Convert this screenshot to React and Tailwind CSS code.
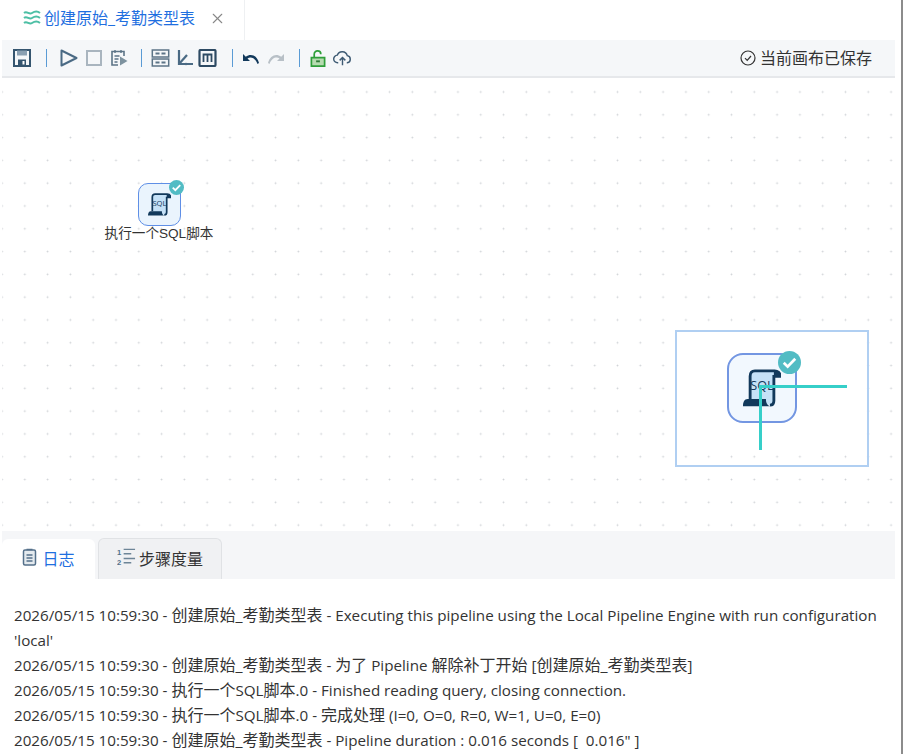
import React from "react";
import { X } from "lucide-react";

const LOG_LINES = [
  "2026/05/15 10:59:30 - 创建原始_考勤类型表 - Executing this pipeline using the Local Pipeline Engine with run configuration",
  "'local'",
  "2026/05/15 10:59:30 - 创建原始_考勤类型表 - 为了 Pipeline 解除补丁开始 [创建原始_考勤类型表]",
  "2026/05/15 10:59:30 - 执行一个SQL脚本.0 - Finished reading query, closing connection.",
  "2026/05/15 10:59:30 - 执行一个SQL脚本.0 - 完成处理 (I=0, O=0, R=0, W=1, U=0, E=0)",
  "2026/05/15 10:59:30 - 创建原始_考勤类型表 - Pipeline duration : 0.016 seconds [  0.016\" ]",
];

// latin and chinese runs need different sizes to get the widths right
function LogLine({ text }) {
  const parts = text.split(/([\u4e00-\u9fff_]+)/);
  return (
    <div className="whitespace-pre">
      {parts.map((p, i) =>
        i % 2 === 1 ? <span key={i} className="text-[16px]">{p}</span> : <span key={i}>{p}</span>
      )}
    </div>
  );
}

function Sep() {
  return <div className="w-px h-[18px] bg-[#5a9bd5] shrink-0" />;
}

function SqlIcon({ className }) {
  return (
    <svg viewBox="0 0 24 24" className={className}>
      <path d="M4.500 19V4.500C4.500 2.300 5.500 1.200 7.500 1.200H20c2 0 3.500 1.300 3.500 3.500h-4V20c0 1.800-1 2.800-2.500 2.800" fill="#c5e1f7" stroke="#12395b" strokeWidth="1.800" />
      <path d="M0 23.500c0-2.500.8-4.500 3-4.500h11.500v.5c0 1.500.8 3.500 2.500 4z" fill="#12395b" />
      <path d="M19.500 1.200c2.500 0 4 1.300 4 3.800h-4z" fill="#12395b" />
      <text x="12" y="13.500" textAnchor="middle" fontSize="8" fill="#12395b" fontFamily="'Open Sans', sans-serif">SQL</text>
    </svg>
  );
}

function CheckBadge({ className }) {
  return (
    <svg viewBox="0 0 20 20" className={className}>
      <circle cx="10" cy="10" r="10" fill="#52bcc4" />
      <path d="M5 10.300l3.400 3.300L15 6.800" fill="none" stroke="#fff" strokeWidth="2.400" />
    </svg>
  );
}

function Toolbar() {
  return (
    <div className="h-[38px] bg-[#f5f7f9] border-b-2 border-[#e6e8eb] flex items-center pl-[11px] pr-[23px]">
      <div className="flex items-center">
        <svg viewBox="0 0 18 18" className="w-[18px] h-[18px]">
          <path d="M1 1h16v16H1z" fill="none" stroke="#35556f" strokeWidth="2" />
          <path d="M4 1.500h10v5H4z" fill="#8aa0b2" />
          <path d="M5 10.500h8V17H5z" fill="#35556f" />
          <path d="M9.500 12h2v3.500h-2z" fill="#fff" />
        </svg>
        <div className="ml-[15px]"><Sep /></div>
        <svg viewBox="0 0 18 18" className="w-[18px] h-[18px] ml-[13px]">
          <path d="M1.500 1.500L16.500 9 1.500 16.500z" fill="none" stroke="#4a6a84" strokeWidth="2" strokeLinejoin="round" />
        </svg>
        <div className="w-[16px] h-[16px] border-2 border-[#a9b5bf] ml-[8px]" />
        <svg viewBox="0 0 18 18" className="w-[18px] h-[18px] ml-[8px]">
          <path d="M14 7V2.500H2V16h6" fill="none" stroke="#5c7487" strokeWidth="1.600" />
          <path d="M5 1v3M11 1v3M4.500 7h5M4.500 10h4M4.500 13h3" stroke="#5c7487" strokeWidth="1.400" />
          <path d="M10 7.500L17.500 12 10 16.500z" fill="#7d929f" />
        </svg>
        <div className="ml-[13px]"><Sep /></div>
        <svg viewBox="0 0 18 18" className="w-[19px] h-[18px] ml-[9px]">
          <path d="M.8 1h16.400v7H.8zM.8 10h16.400v7H.8z" fill="none" stroke="#5c7487" strokeWidth="1.500" />
          <path d="M4 4.500h4M10 4.500h4M4 13.500h4M10 13.500h4" stroke="#5c7487" strokeWidth="1.800" />
        </svg>
        <svg viewBox="0 0 18 18" className="w-[18px] h-[18px] ml-[6px]">
          <path d="M3 1v14h14" fill="none" stroke="#4a6a84" strokeWidth="2.200" />
          <path d="M3 15L11 6" stroke="#4a6a84" strokeWidth="2.200" />
          <circle cx="10" cy="15" r="1.200" fill="#4a6a84" />
        </svg>
        <svg viewBox="0 0 18 18" className="w-[19px] h-[18px] ml-[4px]">
          <rect x="1" y="1" width="16" height="16" rx="1" fill="none" stroke="#2d4a63" strokeWidth="2.200" />
          <path d="M5 13V5.500h8V13M9 5.500V13" fill="none" stroke="#2d4a63" strokeWidth="1.800" />
        </svg>
        <div className="ml-[15px]"><Sep /></div>
        <svg viewBox="0 0 18 14" className="w-[18px] h-[14px] ml-[9px] mt-[4px]">
          <path d="M1 1v7h7L5.500 5.500C8.500 3.500 13 4.500 15.500 11l1.500-1C15 2 8.500 0 3.800 3.800z" fill="#12395b" />
        </svg>
        <svg viewBox="0 0 18 14" className="w-[18px] h-[14px] ml-[7px] mt-[4px]">
          <path d="M17 1v7h-7l2.500-2.500C9.500 3.500 5 4.500 2.500 11L1 10C3 2 9.500 0 14.200 3.800z" fill="#b8c0c7" />
        </svg>
        <div className="ml-[14px]"><Sep /></div>
        <svg viewBox="0 0 16 18" className="w-[16px] h-[17px] ml-[10px]">
          <path d="M1 8h14v9H1z" fill="#b6dbb0" stroke="#2f9e3a" strokeWidth="1.800" />
          <path d="M4 8V4.500C4 2.500 5.500 1 7.500 1S11 2.500 11 4.500" fill="none" stroke="#2f9e3a" strokeWidth="1.800" />
          <path d="M6 12h4" stroke="#2f7a38" strokeWidth="2" />
        </svg>
        <svg viewBox="0 0 20 16" className="w-[19px] h-[16px] ml-[7px]">
          <path d="M5.500 13H5a4 4 0 0 1-.5-8 5.500 5.500 0 0 1 10.500.500A3.800 3.800 0 0 1 15 13h-.5" fill="none" stroke="#3d5a73" strokeWidth="1.500" />
          <path d="M10 15.500V8M7 10.500L10 7.500l3 3" fill="none" stroke="#3d5a73" strokeWidth="1.500" />
        </svg>
      </div>
      <div className="ml-auto flex items-center gap-[4px] text-[#333] text-[16px]">
        <svg viewBox="0 0 16 16" className="w-[16px] h-[16px]">
          <circle cx="8" cy="8" r="7" fill="none" stroke="#333" strokeWidth="1.200" />
          <path d="M5 8.200l2.200 2.200L11 6" fill="none" stroke="#333" strokeWidth="1.200" />
        </svg>
        <span>当前画布已保存</span>
      </div>
    </div>
  );
}

function Canvas() {
  return (
    <div className="relative h-[453px] bg-white bg-[radial-gradient(circle,#cfd2d6_0.8px,transparent_1.1px)] bg-[length:22.8px_22.8px] bg-[position:-11.4px_2.6px]">
      <div className="absolute left-[102px] top-[105px] w-[110px] flex flex-col items-center">
        <div className="relative w-[43px] h-[43px] rounded-[10px] border border-[#5f8fe6] bg-[#eaf4fd] flex items-center justify-center">
          <SqlIcon className="w-[23px] h-[23px]" />
          <CheckBadge className="absolute -top-[4px] -right-[4px] w-[15px] h-[15px]" />
        </div>
        <div className="text-[13.600px] leading-[15px] text-[#333] font-['Liberation_Sans','Noto_Sans_CJK_SC',sans-serif] whitespace-nowrap">执行一个SQL脚本</div>
      </div>
      {/* minimap */}
      <div className="absolute left-[673px] top-[252px] w-[194px] h-[137px] border-2 border-[#b0cff2]">
        <div className="w-[189px] h-[112px] bg-white" />
        <div className="absolute left-[50px] top-[21px] w-[70px] h-[70px] rounded-[16px] border-2 border-[#7396e2] bg-[#f2f8fe] flex items-center justify-center">
          <SqlIcon className="w-[38px] h-[38px]" />
        </div>
        <CheckBadge className="absolute left-[101px] top-[19px] w-[23px] h-[23px]" />
        <div className="absolute left-[83px] top-[53px] w-[87px] h-[3px] bg-[#36cfc9]" />
        <div className="absolute left-[82px] top-[53px] w-[3px] h-[65px] bg-[#36cfc9]" />
      </div>
    </div>
  );
}

function LogTabs() {
  return (
    <div className="h-[48px] bg-[#f5f6f8] flex items-end gap-[3px]">
      <div className="w-[93px] h-[40px] bg-white rounded-t-[6px] flex items-center justify-center gap-[5px] text-[#1f6fe0] text-[16px]">
        <svg viewBox="0 0 14 18" className="w-[15px] h-[18px] mb-[5px]">
          <rect x="1" y="2" width="12" height="15" rx="1.500" fill="#e4eaee" stroke="#54708a" strokeWidth="1.500" />
          <path d="M4 1.500h6M4 7h6M4 10h6M4 13h6" stroke="#54708a" strokeWidth="1.300" />
        </svg>
        <span>日志</span>
      </div>
      <div className="w-[124px] h-[41px] bg-[#f0f1f3] border border-b-0 border-[#e0e2e5] rounded-t-[6px] flex items-center justify-center gap-[3px] text-[#333] text-[16px]">
        <svg viewBox="0 0 20 20" className="w-[19px] h-[20px] mb-[4px]">
          <text x="0" y="8" fontSize="8" fontWeight="700" fill="#54708a" fontFamily="'Liberation Sans', sans-serif">1</text>
          <text x="0" y="18" fontSize="8" fontWeight="700" fill="#54708a" fontFamily="'Liberation Sans', sans-serif">2</text>
          <path d="M7 2h12M7 6.500h8M7 11.500h12M7 16h8" stroke="#6d8597" strokeWidth="1.500" />
        </svg>
        <span>步骤度量</span>
      </div>
    </div>
  );
}

export default function App() {
  return (
    <div className="w-[903px] h-[754px] overflow-hidden bg-white border-r-2 border-[#8c8c8c] pl-[2px] pr-[6px] font-['Open_Sans','Noto_Sans_CJK_SC',sans-serif]">
      <div className="h-[40px] flex">
        <div className="w-[243px] border-r border-[#eef0f2] flex items-center pl-[20px] pb-[4px] text-[#1f6fe0] text-[16px]">
          <svg viewBox="0 0 20 18" className="w-[20px] h-[18px]">
            <path d="M2 4c3-2.500 5 2 8 0s5-2.500 8 0M2 9c3-2.500 5 2 8 0s5-2.500 8 0M2 14c3-2.500 5 2 8 0s5-2.500 8 0" fill="none" stroke="#4dbfa5" strokeWidth="2" />
          </svg>
          <span className="ml-[2px]">创建原始_考勤类型表</span>
          <X className="w-[17px] h-[17px] ml-[14px] text-[#888]" strokeWidth={1.500} />
        </div>
      </div>
      <Toolbar />
      <Canvas />
      <LogTabs />
      <div className="pl-[12px] pt-[24px] text-[15.200px] leading-[25px] text-[#333]">
        {LOG_LINES.map((line, i) => (
          <LogLine key={i} text={line} />
        ))}
      </div>
    </div>
  );
}
